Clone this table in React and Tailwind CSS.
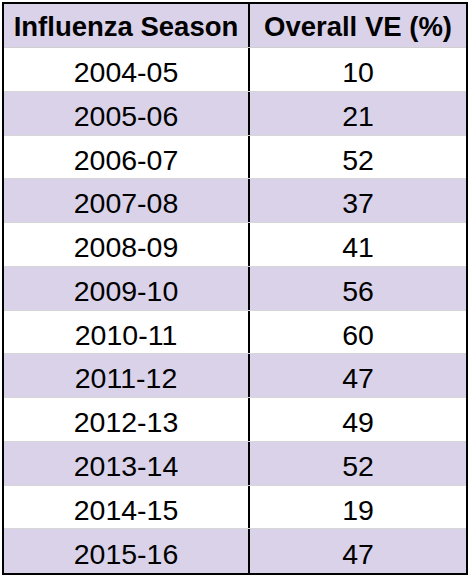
import React from "react";

const rows = [
  ["2004-05", "10"],
  ["2005-06", "21"],
  ["2006-07", "52"],
  ["2007-08", "37"],
  ["2008-09", "41"],
  ["2009-10", "56"],
  ["2010-11", "60"],
  ["2011-12", "47"],
  ["2012-13", "49"],
  ["2013-14", "52"],
  ["2014-15", "19"],
  ["2015-16", "47"],
];

export default function App() {
  return (
    <div
      className="w-[470px] h-[578px] bg-white pt-[2px] pl-[2px]"
      style={{ fontFamily: '"Liberation Sans", Arial, sans-serif' }}
    >
      <div className="w-[466px] border-2 border-black text-black">
        {/* Header */}
        <div className="flex h-[44px] bg-[#d9d2e9] border-b border-[#cfcfcf] text-[27.5px] font-bold leading-none">
          <div className="w-[246px] flex items-center justify-center pt-[2px] border-r-2 border-black">
            Influenza Season
          </div>
          <div className="flex-1 flex items-center justify-center pt-[2px]">
            Overall VE (%)
          </div>
        </div>

        {/* Rows */}
        {rows.map(([season, ve], i) => (
          <div
            key={season}
            className={
              "flex h-[43.75px] text-[28.5px] leading-none border-b border-[#d6d6d6] last:border-b-0 " +
              (i % 2 === 0 ? "bg-white" : "bg-[#d9d2e9]")
            }
          >
            <div className="w-[246px] flex items-center justify-center pt-[6px] border-r-2 border-black">
              {season}
            </div>
            <div className="flex-1 flex items-center justify-center pt-[6px]">{ve}</div>
          </div>
        ))}
      </div>
    </div>
  );
}
